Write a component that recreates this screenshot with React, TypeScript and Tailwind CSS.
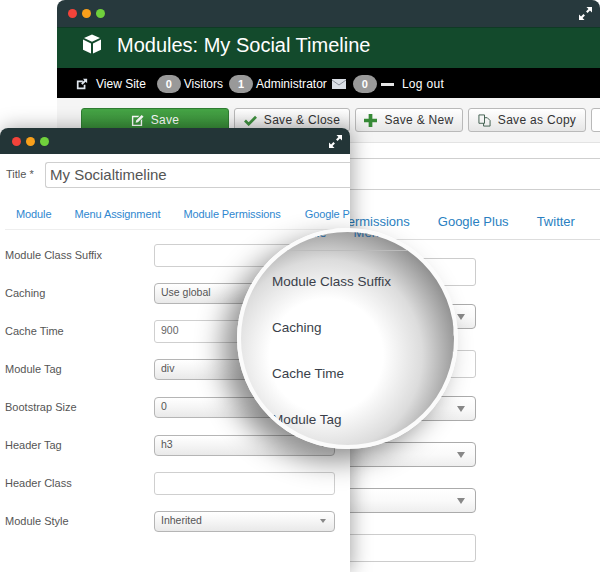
import React from "react";

function Dots() {
  return (
    <div className="flex items-center gap-[5px]">
      <span className="w-[9px] h-[9px] rounded-full bg-[#f4433a]" />
      <span className="w-[9px] h-[9px] rounded-full bg-[#f9a01b]" />
      <span className="w-[9px] h-[9px] rounded-full bg-[#70d13c]" />
    </div>
  );
}

function Expand() {
  return (
    <svg viewBox="0 0 14 14" className="w-[13px] h-[13px]" fill="#fff">
      <path d="M8 0h6v6l-2.2-2.2-2.6 2.6-1.6-1.6 2.6-2.6zM6 14H0V8l2.2 2.2 2.6-2.6 1.6 1.6-2.6 2.6z" />
    </svg>
  );
}

function Cube() {
  return (
    <svg viewBox="0 0 20 20" className="w-[20px] h-[20px] mb-[3px]" fill="#fff">
      <path d="M10 0.500l8 3.400-8 3.800-8-3.800zM1 5.500l8 3.900V19.500l-8-3.800zM19 5.500v10.200L11 19.500V9.400z" />
    </svg>
  );
}

function Badge({ n }: { n: string }) {
  return (
    <span className="w-[24px] h-[18px] rounded-full bg-[#999999] text-white font-bold text-[11px] flex items-center justify-center">
      {n}
    </span>
  );
}

function ToolButton({ w, icon, label }: { w: string; icon: React.ReactNode; label: string }) {
  return (
    <div className={`${w} h-[24px] shrink-0 rounded-[3px] border border-[#b9b9b9] bg-gradient-to-b from-white to-[#e6e6e6] flex items-center justify-center gap-[7px] text-[12px] tracking-[0.3px] text-[#333333]`}>
      {icon}
      <span>{label}</span>
    </div>
  );
}

function BackSelect({ mb }: { mb: string }) {
  return (
    <div className={`${mb} w-[240px] h-[25px] rounded-[4px] border border-[#ababab] bg-gradient-to-b from-white via-[#fafafa] to-[#eeeeee] flex items-center justify-end pr-[10px]`}>
      <span className="w-0 h-0 border-x-[4px] border-x-transparent border-t-[6px] border-t-[#888888]" />
    </div>
  );
}

function BackInput({ mb }: { mb: string }) {
  return <div className={`${mb} w-[240px] h-[28px] rounded-[3px] border border-[#cccccc] bg-white`} />;
}

function FrontRow({ label, kind, value }: { label: string; kind: "input" | "select"; value?: string }) {
  return (
    <div className="h-[38px] flex items-center pl-[5px] pr-[15px]">
      <span className="w-[149px] text-[11px] text-[#555555]">{label}</span>
      {kind === "input" ? (
        <div className="w-[181px] h-[23px] rounded-[3px] border border-[#cfcfcf] bg-white flex items-center pl-[6px] text-[10.5px] text-[#666666]">
          {value}
        </div>
      ) : (
        <div className="w-[181px] h-[21px] rounded-[4px] border border-[#b5b5b5] bg-gradient-to-b from-white via-[#f5f5f5] to-[#e9e9e9] flex items-center justify-between pl-[6px] pr-[8px] text-[10.5px] text-[#555555]">
          <span>{value}</span>
          <span className="w-0 h-0 border-x-[3px] border-x-transparent border-t-[4px] border-t-[#888888]" />
        </div>
      )}
    </div>
  );
}

export default function App() {
  return (
    <div className="relative w-[600px] h-[572px] overflow-hidden bg-white font-['Liberation_Sans',Arial,sans-serif]">
      {/* back window */}
      <div className="absolute left-[57px] top-0 w-[543px] h-[572px] flex flex-col">
        <div className="h-[27px] shrink-0 rounded-t-[8px] bg-[#27393d] flex items-center justify-between pl-[11px] pr-[8px]">
          <Dots />
          <Expand />
        </div>
        <div className="h-[41px] shrink-0 bg-[#134a2c] border-t border-[#0f3a25] flex items-center pl-[25px] pb-[6px] gap-[15px] text-white text-[20px]">
          <Cube />
          <span>Modules: My Social Timeline</span>
        </div>
        <div className="h-[30px] shrink-0 bg-black flex items-center pl-[19px] pt-[2px] text-[12px] text-white">
          <svg viewBox="0 0 14 14" className="w-[12px] h-[12px] mr-[8px]" fill="#dfe6ee">
            <path d="M1 3h7v2H3v6h6V8h2v5H1zM8 1h5v5l-1.700-1.700L7.500 8 6 6.500l3.700-3.800z" />
          </svg>
          <span className="mr-[11px]">View Site</span>
          <Badge n="0" />
          <span className="ml-[3px] mr-[6px]">Visitors</span>
          <Badge n="1" />
          <span className="ml-[3px] mr-[5px] tracking-[0.02px]">Administrator</span>
          <svg viewBox="0 0 14 10" className="w-[14px] h-[10px] mr-[7px]">
            <rect width="14" height="10" fill="#d9dee5" />
            <path d="M0 1l7 5 7-5" fill="none" stroke="#8a8f99" />
          </svg>
          <Badge n="0" />
          <span className="ml-[4px] mr-[8px] w-[13px] h-[3px] bg-[#e5e5e5]" />
          <span className="tracking-[0.3px]">Log out</span>
        </div>
        <div className="h-[45px] shrink-0 bg-[#f5f5f5] border-b border-[#e3e3e3] flex items-start pt-[10px] pl-[24px] gap-[5px]">
          <div className="w-[148px] h-[24px] shrink-0 rounded-[3px] border border-[#2f7d32] bg-gradient-to-b from-[#46a546] to-[#378a37] flex items-center justify-center gap-[7px] text-white text-[12px] tracking-[0.3px]">
            <svg viewBox="0 0 14 14" className="w-[13px] h-[13px]" fill="#fff">
              <path d="M1 2h8L7.500 3.500H2.500v8h8V7L12 5.500V13H1zM11.500 1L13.500 3 7.500 9 5 9.500 5.500 7z" />
            </svg>
            <span>Save</span>
          </div>
          <ToolButton w="w-[116px]" label="Save & Close" icon={
            <svg viewBox="0 0 14 12" className="w-[13px] h-[11px]"><path d="M1 6l4 4 8-8" fill="none" stroke="#3f8f3f" strokeWidth="3" /></svg>
          } />
          <ToolButton w="w-[108px]" label="Save & New" icon={
            <svg viewBox="0 0 14 14" className="w-[13px] h-[13px]" fill="#378a37"><path d="M5 0h4v5h5v4H9v5H5V9H0V5h5z" /></svg>
          } />
          <ToolButton w="w-[118px]" label="Save as Copy" icon={
            <svg viewBox="0 0 14 14" className="w-[13px] h-[13px]" fill="none" stroke="#3a5a4a"><path d="M1 1h6v9H1zM7 4h3l3 3v6H6v-3" /></svg>
          } />
          <div className="w-[40px] h-[24px] shrink-0 rounded-[3px] border border-[#b9b9b9] bg-white" />
        </div>
        <div className="h-[16px] shrink-0 bg-white border-b border-[#cfcfcf]" />
        <div className="h-[31px] shrink-0 bg-white border-b border-[#cfcfcf]" />
        <div className="h-[50px] shrink-0 border-b border-[#dddddd] flex items-end pb-[8px] text-[13px] text-[#2a7fc1] whitespace-nowrap">
          <span className="ml-[282px]">Permissions</span>
          <span className="ml-[28px]">Google Plus</span>
          <span className="ml-[28px]">Twitter</span>
        </div>
        <div className="pl-[179px] pt-[18px]">
          <BackInput mb="mb-[18px]" />
          <BackSelect mb="mb-[21px]" />
          <BackInput mb="mb-[18px]" />
          <BackSelect mb="mb-[21px]" />
          <BackSelect mb="mb-[21px]" />
          <BackSelect mb="mb-[21px]" />
          <BackInput mb="" />
        </div>
      </div>

      {/* front window */}
      <div className="absolute left-0 top-[128px] w-[350px] h-[444px] bg-white rounded-t-[8px] flex flex-col shadow-[2px_0_20px_rgba(0,0,0,0.35)]">
        <div className="h-[26px] shrink-0 rounded-t-[8px] bg-[#233537] flex items-center justify-between pl-[12px] pr-[8px] pt-[1px]">
          <Dots />
          <Expand />
        </div>
        <div className="h-[34px] shrink-0 mt-[4px] flex items-center pl-[6px] text-[11px] text-[#555555]">
          <span className="w-[39px] mb-[1px]">Title *</span>
          <div className="flex-1 h-[26px] rounded-l-[3px] border border-r-0 border-[#cfcfcf] flex items-center pl-[4px] text-[15px] text-[#555555]">My Socialtimeline</div>
        </div>
        <div className="h-[38px] shrink-0 ml-[5px] border-b border-[#eeeeee] flex items-end pb-[7px] pl-[11px] text-[11px] tracking-[-0.1px] text-[#2f87cf] overflow-hidden whitespace-nowrap">
          <span className="mr-[23px]">Module</span>
          <span className="mr-[23px]">Menu Assignment</span>
          <span className="mr-[24px]">Module Permissions</span>
          <span>Google Plus</span>
        </div>
        <div className="pt-[6px]">
          <FrontRow label="Module Class Suffix" kind="input" />
          <FrontRow label="Caching" kind="select" value="Use global" />
          <FrontRow label="Cache Time" kind="input" value="900" />
          <FrontRow label="Module Tag" kind="select" value="div" />
          <FrontRow label="Bootstrap Size" kind="select" value="0" />
          <FrontRow label="Header Tag" kind="select" value="h3" />
          <FrontRow label="Header Class" kind="input" />
          <FrontRow label="Module Style" kind="select" value="Inherited" />
        </div>
      </div>

      {/* magnifier */}
      <div className="absolute left-[237px] top-[228px] w-[221px] h-[221px] rounded-full overflow-hidden border-[4px] border-[#fbfbfb] bg-[radial-gradient(circle_at_40%_58%,#ffffff_0%,#ffffff_32%,#dcdcdc_54%,#868686_78%)] shadow-[-14px_12px_28px_rgba(0,0,0,0.45)]">
        <div className="relative w-full h-full">
          <div className="absolute left-[61px] -top-[9px] flex gap-[27px] text-[13px] text-[#1f5f95] whitespace-nowrap">
            <span>dule</span>
            <span>Menu</span>
          </div>
          <div className="absolute left-0 right-0 top-[18px] h-px bg-[#bbbbbb]" />
          <div className="absolute left-[211px] top-[81px] w-[10px] h-[25px] rounded-l-[4px] border border-[#999999] bg-[#dddddd]" />
          <div className="absolute left-[211px] top-[118px] w-[10px] h-[28px] rounded-l-[3px] border border-[#aaaaaa] bg-[#e5e5e5]" />
          <div className="pl-[31px] pt-[42px] flex flex-col gap-[30px] text-[13.5px] leading-[16px] text-[#3a3f4a]">
            <span>Module Class Suffix</span>
            <span>Caching</span>
            <span>Cache Time</span>
            <span>Module Tag</span>
          </div>
        </div>
      </div>
    </div>
  );
}
